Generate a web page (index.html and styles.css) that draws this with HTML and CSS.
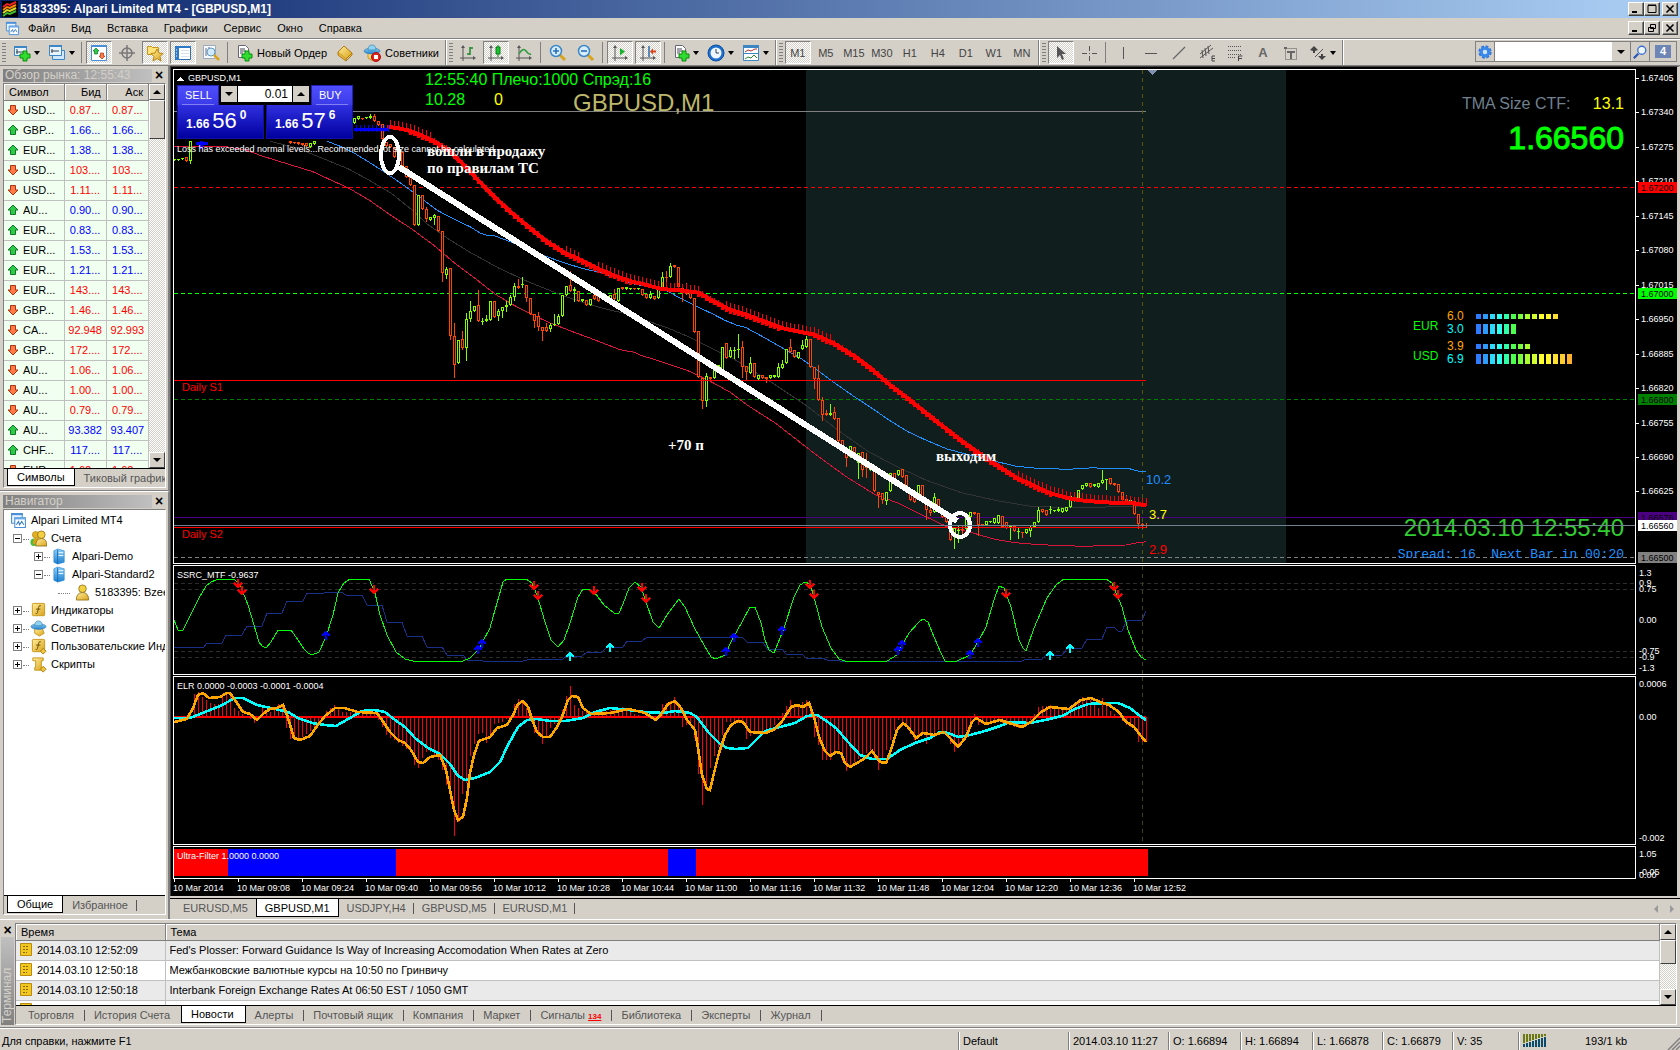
FILE: index.html
```html
<!DOCTYPE html>
<html lang="ru">
<head>
<meta charset="utf-8">
<title>5183395: Alpari Limited MT4 - [GBPUSD,M1]</title>
<link rel="stylesheet" href="styles.css">
</head>
<body>
<svg class="defs" aria-hidden="true">
  <defs>
    <linearGradient id="gGold" x1="0" y1="0" x2="1" y2="1"><stop offset="0" stop-color="#ffee9a"/><stop offset="1" stop-color="#d9a21b"/></linearGradient>
    <linearGradient id="gBlue" x1="0" y1="0" x2="0" y2="1"><stop offset="0" stop-color="#8fd0f5"/><stop offset="1" stop-color="#1d7fd0"/></linearGradient>
    <symbol id="up" viewBox="0 0 12 12"><path d="M6 1l5 5H8.500v4.500h-5V6H1z" fill="#2fc94a" stroke="#0c7a24"/></symbol>
    <symbol id="down" viewBox="0 0 12 12"><path d="M6 11l5-5H8.500V1.500h-5V6H1z" fill="#ff7a45" stroke="#a83410"/></symbol>
    <symbol id="logo" viewBox="0 0 16 16"><path d="M0 0h16v16H0z"/><path d="M1 6l4-3 3 1 6-3" stroke="#e22" stroke-width="2" fill="none"/><path d="M1 9l4-3 3 1 6-3" stroke="#f80" stroke-width="2" fill="none"/><path d="M1 12l4-3 3 1 6-3" stroke="#dd2" stroke-width="2" fill="none"/><path d="M1 15l4-3 3 1 6-3" stroke="#4b3" stroke-width="2" fill="none"/></symbol>
    <symbol id="windows" viewBox="0 0 16 16"><path d="M1.500 1.500h10v9h-10z" fill="#eaf4ff" stroke="#4a8fd8"/><path d="M1 1h11v2H1z" fill="#4a8fd8"/><path d="M4.500 5.500h10v9h-10z" fill="#fff" stroke="#4a8fd8"/><path d="M4 5h11v2H4z" fill="#6aa8e8"/><path d="M6 12l2-3 1 3 2-3 2 3" fill="none" stroke="#3a7fc8"/></symbol>
    <symbol id="plus" viewBox="0 0 12 12"><path d="M4 1h4v3h3v4H8v3H4V8H1V4h3z" fill="#2fdc2f" stroke="#0a8a0a"/></symbol>
    <symbol id="newchart" viewBox="0 0 18 18"><path d="M1.500 2.500h12v9h-12z" fill="#eaf4ff" stroke="#3d86c6"/><path d="M1 2h13v2H1z" fill="#3d86c6"/><path d="M4 5v5M3 8h8" stroke="#345"/><use href="#plus" x="6" y="6" width="12" height="12"/></symbol>
    <symbol id="profiles" viewBox="0 0 18 18"><path d="M4.500 6.500h12v9h-12z" fill="#cfe6fb" stroke="#3d86c6"/><path d="M1.500 1.500h12v10h-12z" fill="#eaf4ff" stroke="#3d86c6"/><path d="M1 1h13v2H1z" fill="#3d86c6"/><path d="M4 5v4M3 7h8" stroke="#345"/></symbol>
    <symbol id="market" viewBox="0 0 18 18"><path d="M1.500 1.500h15v15h-15z" fill="#fff" stroke="#4a90d8"/><path d="M1 1h16v2H1z" fill="#4a90d8"/><path d="M6 4l3 3H7.500v3h-3V7H3z" fill="#2fc94a" stroke="#0c7a24" stroke-width=".7"/><path d="M12 15l3-3h-1.500V9h-3v3H9z" fill="#ff7a45" stroke="#a83410" stroke-width=".7"/></symbol>
    <symbol id="target" viewBox="0 0 18 18"><circle cx="9" cy="9" r="5" fill="none" stroke="#777" stroke-width="1.500"/><path d="M9 1v16M1 9h16" stroke="#777" stroke-width="1.500"/></symbol>
    <symbol id="star" viewBox="0 0 18 18"><path d="M1.500 2.500h4l1 1h6v7h-11z" fill="#ffe27a" stroke="#c8961a"/><path d="M11 5l2 4 4 .5-3 3 1 4.500-4-2.500L7 17l1-4.500-3-3 4-.5z" fill="url(#gGold)" stroke="#b98510"/></symbol>
    <symbol id="panel" viewBox="0 0 18 18"><path d="M1.500 2.500h15v13h-15z" fill="#fff" stroke="#2d6fb8"/><path d="M1 2h16v2H1zM1 4h4v12H1z" fill="#2d78c8"/><path d="M2 6h1M2 9h1M2 12h1" stroke="#fff"/><path d="M7 6.500h8M7 9.500h8M7 12.500h8" stroke="#d6e2f0"/></symbol>
    <symbol id="tester" viewBox="0 0 18 18"><path d="M1.500 1.500h12v13h-12z" fill="#f8fbff" stroke="#9ab"/><path d="M4 4v8M7 3v6" stroke="#668"/><circle cx="9" cy="8" r="4" fill="#cfe9ff" stroke="#69b"/><path d="M12 11l5 5" stroke="#d9a21b" stroke-width="2.500"/></symbol>
    <symbol id="order" viewBox="0 0 18 18"><path d="M3.500 1.500h7l3 3v9h-10z" fill="#fff" stroke="#667"/><path d="M5 5h5M5 7h6M5 9h3" stroke="#445"/><use href="#plus" x="6" y="6" width="12" height="12"/></symbol>
    <symbol id="book" viewBox="0 0 18 18"><path d="M2 8l6-6 8 7-6 6z" fill="url(#gGold)" stroke="#b07a10"/><path d="M2 8v3l8 6v-2M10 17l6-6V9" fill="#e8b838" stroke="#b07a10"/></symbol>
    <symbol id="hat" viewBox="0 0 18 18"><path d="M5 9h8l2 5-5 3-5-3z" fill="url(#gGold)" stroke="#c8961a"/><ellipse cx="9" cy="7" rx="8" ry="3" fill="url(#gBlue)" stroke="#2c7ba8" stroke-width=".6"/><path d="M5 6q0-5 4-5t4 5z" fill="#8ed2f0" stroke="#2c7ba8" stroke-width=".6"/></symbol>
    <symbol id="advisor" viewBox="0 0 18 18"><use href="#hat" width="18" height="18"/><circle cx="13" cy="13" r="4.500" fill="#e0231c" stroke="#a11"/><path d="M11 11h4v4h-4z" fill="#fff"/></symbol>
    <symbol id="axes" viewBox="0 0 18 18"><path d="M4 3v14M1 14h14" stroke="#555"/><path d="M4 1L2 4h4zM17 14l-3-2v4z" fill="#555"/></symbol>
    <symbol id="bars" viewBox="0 0 18 18"><use href="#axes" width="18" height="18"/><path d="M11 3v8M11 4h3M8 10h3" stroke="#1a8a2a" stroke-width="1.500"/></symbol>
    <symbol id="candle" viewBox="0 0 18 18"><use href="#axes" width="18" height="18"/><path d="M11 1v12" stroke="#0a8a1a"/><path d="M9 3h4v7H9z" fill="#19c22c" stroke="#0a7a1a"/></symbol>
    <symbol id="line" viewBox="0 0 18 18"><use href="#axes" width="18" height="18"/><path d="M4 10q4-7 7-3t5 3" stroke="#2a9a3a" stroke-width="1.500" fill="none"/></symbol>
    <symbol id="zin" viewBox="0 0 18 18"><path d="M11 11l5 5" stroke="#d9a21b" stroke-width="3"/><circle cx="7" cy="7" r="5.500" fill="#d7ecff" stroke="#3a88c8" stroke-width="1.500"/><path d="M4 7h6M7 4v6" stroke="#2a6fb8" stroke-width="1.600"/></symbol>
    <symbol id="zout" viewBox="0 0 18 18"><path d="M11 11l5 5" stroke="#d9a21b" stroke-width="3"/><circle cx="7" cy="7" r="5.500" fill="#d7ecff" stroke="#3a88c8" stroke-width="1.500"/><path d="M4 7h6" stroke="#2a6fb8" stroke-width="1.600"/></symbol>
    <symbol id="scroll" viewBox="0 0 18 18"><use href="#axes" width="18" height="18"/><path d="M9 4l5 3.500-5 4z" fill="#19b22c"/></symbol>
    <symbol id="shift" viewBox="0 0 18 18"><use href="#axes" width="18" height="18"/><path d="M10 2v11" stroke="#246aa8" stroke-width="1.500"/><path d="M11 7.500l3-3v2h3v2h-3v2z" fill="#d8421a"/></symbol>
    <symbol id="clock" viewBox="0 0 18 18"><circle cx="9" cy="9" r="8" fill="#1c6fd0" stroke="#0d4d9c"/><circle cx="9" cy="9" r="5.500" fill="#eef7ff"/><path d="M9 5v4h3" stroke="#345" fill="none"/></symbol>
    <symbol id="template" viewBox="0 0 18 18"><path d="M1.500 1.500h15v15h-15z" fill="#fff" stroke="#3d86c6"/><path d="M1 1h16v3H1zM1 9h16v1H1z" fill="#3d86c6"/><path d="M3 8l3-2 3 1 4-2h2" stroke="#a33" fill="none"/><path d="M3 15l3-2 3 1 3-3 3 3" stroke="#2a8a3a" fill="none"/></symbol>
    <symbol id="cursor" viewBox="0 0 18 18"><path d="M5 2v12l3-3 2 5 2-1-2-5h4z" fill="#555"/></symbol>
    <symbol id="cross" viewBox="0 0 18 18"><path d="M9.500 2v5M9.500 12v5M2 9.500h5M12 9.500h5M9 9.500h1" stroke="#555"/></symbol>
    <symbol id="vline" viewBox="0 0 18 18"><path d="M9.500 3v12" stroke="#555"/></symbol>
    <symbol id="hline" viewBox="0 0 18 18"><path d="M3 9.500h12" stroke="#555"/></symbol>
    <symbol id="trend" viewBox="0 0 18 18"><path d="M3 15L15 3" stroke="#666" stroke-width="1.200"/></symbol>
    <symbol id="channel" viewBox="0 0 18 18"><path d="M2 10L13 1M2 14L15 4M4 6l1 8M7 4l1 8M10 2l1 8" stroke="#555"/><path d="M17 12h-3v5h3M14 14.500h3" stroke="#444" fill="none"/></symbol>
    <symbol id="fibo" viewBox="0 0 18 18"><path d="M2 2.500h13M2 6.500h13M2 10.500h13M2 13.500h8" stroke="#555" stroke-dasharray="1 1"/><path d="M12.500 17v-5h4M12 14.500h4" stroke="#444" fill="none"/></symbol>
    <symbol id="label" viewBox="0 0 18 18"><path d="M3.500 4.500h11v11h-11z" fill="none" stroke="#555" stroke-dasharray="1 1"/><path d="M2 3h3v2H2zM5 7h8v2h-3v6H8V9H5z" fill="#666"/></symbol>
    <symbol id="shapes" viewBox="0 0 18 18"><path d="M5 2l4 4-3 1v2H4V7L1 6zM13 16l4-4h-3v-2h-2v2H9z" fill="#444"/><path d="M6 13L14 5" stroke="#555"/></symbol>
    <symbol id="gear" viewBox="0 0 18 18"><circle cx="9" cy="9" r="6" fill="#2f78dc" stroke="#2f78dc" stroke-width="3" stroke-dasharray="3 1.700"/><circle cx="9" cy="9" r="6" fill="#3c88e8"/><circle cx="9" cy="9" r="2.500" fill="#cfe4ff"/></symbol>
    <symbol id="search" viewBox="0 0 18 18"><path d="M7 11l-5 5" stroke="#2a55b8" stroke-width="2.500"/><circle cx="11" cy="7" r="4.500" fill="#eef6ff" stroke="#3a70d0" stroke-width="1.500"/></symbol>
    <symbol id="people" viewBox="0 0 18 18"><ellipse cx="4" cy="13" rx="3.500" ry="4" fill="#3fc03f"/><circle cx="6" cy="5" r="3.500" fill="#e0b020" stroke="#a87a10" stroke-width=".6"/><path d="M3 15q0-7 4-7t4 7z" fill="#d9a21b"/><circle cx="12" cy="5" r="4" fill="#f2d040" stroke="#8a6408" stroke-width=".8"/><path d="M6 17q0-8 6-8t6 8z" fill="url(#gGold)" stroke="#8a6408" stroke-width=".8"/></symbol>
    <symbol id="user" viewBox="0 0 18 18"><circle cx="9" cy="5" r="4" fill="#f2d040" stroke="#8a6408" stroke-width=".8"/><path d="M2.500 17q0-8 6.500-8t6.500 8z" fill="url(#gGold)" stroke="#8a6408" stroke-width=".8"/></symbol>
    <symbol id="server" viewBox="0 0 18 18"><path d="M3 3l4-2 7 2v12l-7 2-4-2z" fill="url(#gBlue)" stroke="#1680d8" stroke-width=".6"/><path d="M7 2v15" stroke="#1670c0"/><path d="M8 5h5M8 8h5" stroke="#fff"/></symbol>
    <symbol id="func" viewBox="0 0 18 18"><rect x="2.500" y="1.500" width="13" height="13" rx="1" fill="url(#gGold)" stroke="#c8961a"/><path d="M11.500 4q-2-1-2.500 2l-1 5q-.5 2-2 1M6.500 7.500h4.500" stroke="#6a4a00" fill="none"/></symbol>
    <symbol id="func2" viewBox="0 0 18 18"><use href="#func" width="18" height="18"/><path d="M14 11l3 3-3 3-3-3z" fill="#f0c840" stroke="#a87a10"/></symbol>
    <symbol id="script" viewBox="0 0 18 18"><path d="M3 2h11v3h-2v7h3v3H5v-3h1V5H3z" fill="url(#gGold)" stroke="#c8961a"/><path d="M14 11l3 3-3 3-3-3z" fill="#f0c840" stroke="#a87a10"/></symbol>
    <symbol id="news" viewBox="0 0 12 14"><path d="M.5.500h11v12H.5z" fill="#f2c81e" stroke="#b88a10"/><path d="M3 3.500h6M3 6.500h6M3 9.500h4" stroke="#8a6400" stroke-dasharray="2 1"/></symbol>
  </defs>
</svg>

<header class="titlebar">
  <svg class="i16"><use href="#logo"/></svg>
  <h1>5183395: Alpari Limited MT4 - [GBPUSD,M1]</h1>
  <div class="winbtns">
    <button type="button" class="wb" aria-label="Свернуть"><svg viewBox="0 0 10 10"><path d="M1 7h5v2H1z"/></svg></button><button type="button" class="wb" aria-label="Развернуть"><svg viewBox="0 0 10 10"><path d="M1 1.500h8v7H1zM1 1h8" fill="none" stroke="#000"/></svg></button>
    <button type="button" class="wb last" aria-label="Закрыть"><svg viewBox="0 0 10 10"><path d="M1.500 1.500l7 7M8.500 1.500l-7 7" stroke="#000" stroke-width="1.600"/></svg></button>
  </div>
</header>

<nav class="menubar">
  <svg class="i16"><use href="#windows"/></svg>
  <button type="button">Файл</button><button type="button">Вид</button><button type="button">Вставка</button><button type="button">Графики</button><button type="button">Сервис</button><button type="button">Окно</button><button type="button">Справка</button>
  <div class="winbtns">
    <button type="button" class="wb" aria-label="Свернуть окно"><svg viewBox="0 0 10 10"><path d="M1 7h5v2H1z"/></svg></button><button type="button" class="wb" aria-label="Восстановить окно"><svg viewBox="0 0 10 10"><path d="M3.500 1.500h5v4h-5zM1.500 4.500h5v4h-5z" fill="#d4d0c8" stroke="#000"/></svg></button>
    <button type="button" class="wb last" aria-label="Закрыть окно"><svg viewBox="0 0 10 10"><path d="M1.500 1.500l7 7M8.500 1.500l-7 7" stroke="#000" stroke-width="1.600"/></svg></button>
  </div>
</nav>

<div class="toolbars">
  <div class="tb">
    <i class="grip"></i>
    <button type="button" class="t drop" aria-label="Новый график"><svg><use href="#newchart"/></svg></button><button type="button" class="t drop" aria-label="Профили"><svg><use href="#profiles"/></svg></button>
    <i class="sep"></i>
    <button type="button" class="t on" aria-label="Обзор рынка"><svg><use href="#market"/></svg></button><button type="button" class="t" aria-label="Окно данных"><svg><use href="#target"/></svg></button><button type="button" class="t on" aria-label="Навигатор"><svg><use href="#star"/></svg></button><button type="button" class="t on" aria-label="Терминал"><svg><use href="#panel"/></svg></button><button type="button" class="t" aria-label="Тестер"><svg><use href="#tester"/></svg></button>
    <i class="sep"></i>
    <button type="button" class="t txt"><svg><use href="#order"/></svg>Новый Ордер</button><button type="button" class="t" aria-label="Редактор"><svg><use href="#book"/></svg></button><button type="button" class="t txt"><svg><use href="#advisor"/></svg>Советники</button>
  </div>
  <div class="tb">
    <i class="grip"></i>
    <button type="button" class="t" aria-label="Бары"><svg><use href="#bars"/></svg></button><button type="button" class="t on" aria-label="Свечи"><svg><use href="#candle"/></svg></button><button type="button" class="t" aria-label="Линия"><svg><use href="#line"/></svg></button>
    <i class="sep"></i>
    <button type="button" class="t" aria-label="Увеличить"><svg><use href="#zin"/></svg></button><button type="button" class="t" aria-label="Уменьшить"><svg><use href="#zout"/></svg></button>
    <i class="sep"></i>
    <button type="button" class="t on" aria-label="Автопрокрутка"><svg><use href="#scroll"/></svg></button><button type="button" class="t on" aria-label="Сдвиг графика"><svg><use href="#shift"/></svg></button>
    <i class="sep"></i>
    <button type="button" class="t drop" aria-label="Индикаторы"><svg><use href="#order"/></svg></button><button type="button" class="t drop" aria-label="Периоды"><svg><use href="#clock"/></svg></button><button type="button" class="t drop" aria-label="Шаблоны"><svg><use href="#template"/></svg></button>
  </div>
  <div class="tb">
    <i class="grip"></i>
    <button type="button" class="t p on">M1</button><button type="button" class="t p">M5</button><button type="button" class="t p">M15</button><button type="button" class="t p">M30</button><button type="button" class="t p">H1</button><button type="button" class="t p">H4</button><button type="button" class="t p">D1</button><button type="button" class="t p">W1</button><button type="button" class="t p">MN</button>
  </div>
  <div class="tb">
    <i class="grip"></i>
    <button type="button" class="t on" aria-label="Курсор"><svg><use href="#cursor"/></svg></button><button type="button" class="t" aria-label="Перекрестие"><svg><use href="#cross"/></svg></button>
    <i class="sep"></i>
    <button type="button" class="t" aria-label="Вертикальная линия"><svg><use href="#vline"/></svg></button><button type="button" class="t" aria-label="Горизонтальная линия"><svg><use href="#hline"/></svg></button><button type="button" class="t" aria-label="Трендовая линия"><svg><use href="#trend"/></svg></button><button type="button" class="t" aria-label="Канал"><svg><use href="#channel"/></svg></button><button type="button" class="t" aria-label="Фибоначчи"><svg><use href="#fibo"/></svg></button><button type="button" class="t a">A</button><button type="button" class="t" aria-label="Метка"><svg><use href="#label"/></svg></button><button type="button" class="t drop" aria-label="Стрелки"><svg><use href="#shapes"/></svg></button>
  </div>
  <form class="find">
    <button type="button" aria-label="Настройки"><svg><use href="#gear"/></svg></button>
    <input type="text" aria-label="Поиск">
    <button type="button" class="tri" aria-label="История"></button>
    <button type="button" aria-label="Найти"><svg><use href="#search"/></svg></button>
    <button type="button" aria-label="Сообщения"><span class="badge">4</span></button>
  </form>
</div>

<main class="work">
  <aside class="side">
    <section class="dock market">
      <div class="cap"><h2>Обзор рынка: 12:55:43</h2><button type="button" class="x" aria-label="Закрыть">×</button></div>
      <div class="sunk">
        <div class="scrollwrap">
          <table class="quotes">
            <thead><tr><th>Символ</th><th>Бид</th><th>Аск</th></tr></thead>
            <tbody>
              <tr class="dn"><td><svg><use href="#down"/></svg>USD...</td><td>0.87...</td><td>0.87...</td></tr>
              <tr><td><svg><use href="#up"/></svg>GBP...</td><td>1.66...</td><td>1.66...</td></tr>
              <tr><td><svg><use href="#up"/></svg>EUR...</td><td>1.38...</td><td>1.38...</td></tr>
              <tr class="dn"><td><svg><use href="#down"/></svg>USD...</td><td>103....</td><td>103....</td></tr>
              <tr class="dn"><td><svg><use href="#down"/></svg>USD...</td><td>1.11...</td><td>1.11...</td></tr>
              <tr><td><svg><use href="#up"/></svg>AU...</td><td>0.90...</td><td>0.90...</td></tr>
              <tr><td><svg><use href="#up"/></svg>EUR...</td><td>0.83...</td><td>0.83...</td></tr>
              <tr><td><svg><use href="#up"/></svg>EUR...</td><td>1.53...</td><td>1.53...</td></tr>
              <tr><td><svg><use href="#up"/></svg>EUR...</td><td>1.21...</td><td>1.21...</td></tr>
              <tr class="dn"><td><svg><use href="#down"/></svg>EUR...</td><td>143....</td><td>143....</td></tr>
              <tr class="dn"><td><svg><use href="#down"/></svg>GBP...</td><td>1.46...</td><td>1.46...</td></tr>
              <tr class="dn"><td><svg><use href="#down"/></svg>CA...</td><td>92.948</td><td>92.993</td></tr>
              <tr class="dn"><td><svg><use href="#down"/></svg>GBP...</td><td>172....</td><td>172....</td></tr>
              <tr class="dn"><td><svg><use href="#down"/></svg>AU...</td><td>1.06...</td><td>1.06...</td></tr>
              <tr class="dn"><td><svg><use href="#down"/></svg>AU...</td><td>1.00...</td><td>1.00...</td></tr>
              <tr class="dn"><td><svg><use href="#down"/></svg>AU...</td><td>0.79...</td><td>0.79...</td></tr>
              <tr><td><svg><use href="#up"/></svg>AU...</td><td>93.382</td><td>93.407</td></tr>
              <tr><td><svg><use href="#up"/></svg>CHF...</td><td>117....</td><td>117....</td></tr>
              <tr class="dn"><td><svg><use href="#down"/></svg>EUR...</td><td>1.62...</td><td>1.62...</td></tr>
            </tbody>
          </table>
          <div class="sb"><button type="button" class="tri up" aria-label="Вверх"></button><i class="thumb"></i><button type="button" class="tri end" aria-label="Вниз"></button></div>
        </div>
        <div class="tabs"><button type="button" class="cur">Символы</button><button type="button">Тиковый график</button></div>
      </div>
    </section>
    <section class="dock nav">
      <div class="cap"><h2>Навигатор</h2><button type="button" class="x" aria-label="Закрыть">×</button></div>
      <div class="sunk">
        <ul class="tree">
          <li><svg class="ic"><use href="#windows"/></svg>Alpari Limited MT4</li>
          <li class="l1"><i class="box minus"></i><svg class="ic"><use href="#people"/></svg>Счета</li>
          <li class="l2"><i class="box"></i><svg class="ic"><use href="#server"/></svg>Alpari-Demo</li>
          <li class="l2"><i class="box minus"></i><svg class="ic"><use href="#server"/></svg>Alpari-Standard2</li>
          <li class="l3"><i class="stub"></i><svg class="ic"><use href="#user"/></svg>5183395: Bzeen</li>
          <li class="l1"><i class="box"></i><svg class="ic"><use href="#func"/></svg>Индикаторы</li>
          <li class="l1"><i class="box"></i><svg class="ic"><use href="#hat"/></svg>Советники</li>
          <li class="l1"><i class="box"></i><svg class="ic"><use href="#func2"/></svg>Пользовательские Индикаторы</li>
          <li class="l1"><i class="box"></i><svg class="ic"><use href="#script"/></svg>Скрипты</li>
        </ul>
        <div class="tabs"><button type="button" class="cur">Общие</button><button type="button" class="bar">Избранное</button></div>
      </div>
    </section>
  </aside>

  <section class="charts">
    <div class="frame">
      <div class="pane main">
        <div class="plot">
          <svg class="cv" id="main">
            <g transform="translate(-174 -70)">
              <rect x="806" y="70" width="480" height="1000" fill="#111e1e"/>
              <path d="M0 111.500H1146" stroke="#808080"/>
              <path d="M174 187.500H4000" stroke="#f00" stroke-dasharray="4 3"/>
              <path d="M174 293.500H4000" stroke="#0f0" stroke-dasharray="4 3"/>
              <path d="M174 399.500H4000" stroke="#008000" stroke-dasharray="4 3"/>
              <path d="M174 557.500H4000" stroke="#808080" stroke-dasharray="4 3"/>
              <path d="M1142.500 70V1000" stroke="#55550a" stroke-dasharray="4 4"/>
              <path d="M174 517.500H4000" stroke="#4b0082"/>
              <path d="M1147 70h10l-5 5z" fill="#8090b0"/>
              <g id="price"></g>
              <path d="M0 380.500H1146M0 527.500H1146" stroke="#f00"/>
              <g class="note"><ellipse cx="390" cy="155" rx="9" ry="18"/><ellipse cx="960" cy="525" rx="10" ry="12"/><path d="M399 167L957 521" stroke-width="6"/></g>
              <g class="serif"><text x="427" y="156">вошли в продажу</text><text x="427" y="173">по правилам ТС</text><text x="668" y="450">+70 п</text><text x="936" y="461">выходим</text></g>
              <g class="sans"><text class="s16" x="425" y="85" fill="#0f0">12:55:40 Плечо:1000 Спрэд:16</text><text class="s16" x="425" y="105" fill="#0f0">10.28</text><text class="s16" x="494" y="105" fill="#ff0">0</text><text class="s24" x="573" y="111" fill="#bdb76b">GBPUSD,M1</text><text class="s11" x="182" y="391" fill="#f00">Daily S1</text><text class="s11" x="182" y="538" fill="#f00">Daily S2</text><text class="s13" x="1146" y="484" fill="#1e90ff">10.2</text><text class="s13" x="1149" y="519" fill="#ff0">3.7</text><text class="s13" x="1149" y="554" fill="#f00">2.9</text></g>
              <path d="M176 81l4-4 4 4z" fill="#fff"/>
              <g class="small"><text x="188" y="81">GBPUSD,M1</text><text x="177" y="152">Loss has exceeded normal levels...Recommended lot size cannot be calculated.</text></g>
            </g>
          </svg>
          <form class="trade">
            <button type="button" class="tab sell">SELL</button>
            <div class="lot"><button type="button" class="tri" aria-label="Меньше"></button><input type="text" value="0.01" aria-label="Объем"><button type="button" class="tri up" aria-label="Больше"></button></div>
            <button type="button" class="tab buy">BUY</button>
            <button type="button" class="px sellpx"><b>1.66</b><span>56</span><sup>0</sup></button>
            <button type="button" class="px buypx"><b>1.66</b><span>57</span><sup>6</sup></button>
          </form>
          <div class="corner">
            <p class="tma"><span>TMA Size CTF:</span><span class="y">13.1</span></p>
            <p class="bid">1.66560</p>
          </div>
          <svg class="power" id="power"></svg>
          <div class="foot">
            <p class="clock">2014.03.10 12:55:40</p>
            <p class="spread">Spread: 16&nbsp; Next Bar in 00:20</p>
          </div>
          <i class="bidline"></i>
        </div>
        <svg class="axis" id="ax0"></svg>
      </div>
      <div class="pane ssrc">
        <div class="plot"><svg class="cv"><g transform="translate(-174 -566)"><path d="M174 583.500H4000M174 589.500H4000M174 651.500H4000M174 657.500H4000" stroke="#2c2c2c" stroke-dasharray="4 3"/><path d="M1142.500 566V1000" stroke="#44440a" stroke-dasharray="4 4"/><g id="osc"></g><text class="small" x="177" y="578">SSRC_MTF -0.9637</text></g></svg></div>
        <svg class="axis" id="ax1"></svg>
      </div>
      <div class="pane elr">
        <div class="plot"><svg class="cv"><g transform="translate(-174 -677)"><path d="M1142.500 677V1000" stroke="#44440a" stroke-dasharray="4 4"/><g id="hist"></g><text class="small" x="177" y="689">ELR 0.0000 -0.0003 -0.0001 -0.0004</text></g></svg></div>
        <svg class="axis" id="ax2"></svg>
      </div>
      <div class="pane ultra">
        <div class="plot"><svg class="cv"><g transform="translate(-174 -847)"><path d="M174 849h974v27H174z" fill="#f00"/><path d="M228 849h168v27H228zM668 849h28v27h-28z" fill="#00f"/><text class="small" x="177" y="859">Ultra-Filter 1.0000 0.0000</text></g></svg></div>
        <svg class="axis" id="ax3"></svg>
      </div>
      <svg class="timeaxis" id="time"></svg>
    </div>
    <div class="ctabs"><button type="button">EURUSD,M5</button><button type="button" class="cur">GBPUSD,M1</button><button type="button">USDJPY,H4</button><button type="button">GBPUSD,M5</button><button type="button">EURUSD,M1</button><span class="arrows"><i></i><i></i></span></div>
  </section>
</main>

<section class="terminal">
  <div class="vcap"><button type="button" class="x" aria-label="Закрыть">×</button><h2>Терминал</h2></div>
  <div class="sunk">
    <div class="scrollwrap">
      <table class="newslist">
        <thead><tr><th class="time">Время</th><th>Тема</th></tr></thead>
        <tbody>
          <tr><td><svg><use href="#news"/></svg>2014.03.10 12:52:09</td><td>Fed's Plosser: Forward Guidance Is Way of Increasing Accomodation When Rates at Zero</td></tr>
          <tr><td><svg><use href="#news"/></svg>2014.03.10 12:50:18</td><td>Межбанковские валютные курсы на 10:50 по Гринвичу</td></tr>
          <tr><td><svg><use href="#news"/></svg>2014.03.10 12:50:18</td><td>Interbank Foreign Exchange Rates At 06:50 EST / 1050 GMT</td></tr>
          <tr><td><svg><use href="#news"/></svg></td><td></td></tr>
        </tbody>
      </table>
      <div class="sb"><button type="button" class="tri up" aria-label="Вверх"></button><i class="thumb"></i><button type="button" class="tri end" aria-label="Вниз"></button></div>
    </div>
    <div class="tabs wide"><button type="button" class="bar">Торговля</button><button type="button">История Счета</button><button type="button" class="cur">Новости</button><button type="button" class="bar">Алерты</button><button type="button" class="bar">Почтовый ящик</button><button type="button" class="bar">Компания</button><button type="button" class="bar">Маркет</button><button type="button" class="bar">Сигналы <small>134</small></button><button type="button" class="bar">Библиотека</button><button type="button" class="bar">Эксперты</button><button type="button" class="bar">Журнал</button></div>
  </div>
</section>

<footer class="status">
  <span class="help">Для справки, нажмите F1</span>
  <span class="c w110">Default</span><span class="c w100">2014.03.10 11:27</span><span class="c w72">O: 1.66894</span><span class="c w72">H: 1.66894</span><span class="c w70">L: 1.66878</span><span class="c w70">C: 1.66879</span><span class="c w66">V: 35</span>
  <span class="c conn"><svg width="26" height="13" id="signal"></svg><span>193/1 kb</span></span>
  <svg class="sizer" viewBox="0 0 13 13"><path d="M1 13L13 1M5 13l8-8M9 13l4-4" stroke="#808080" stroke-width="1.500"/></svg>
</footer>
<script src="chart.js"></script>
</body>
</html>
```

FILE: styles.css
```css
* { box-sizing: border-box; }
body { margin: 0; min-height: 100vh; display: flex; flex-direction: column; background: #d4d0c8; color: #000; font: 11px/14px "Liberation Sans", Arial, sans-serif; overflow: hidden; }
h1, h2, p, ul { margin: 0; padding: 0; font-size: inherit; font-weight: normal; list-style: none; }
button, input { font: inherit; color: inherit; margin: 0; padding: 0; border: 0; border-radius: 0; background: none; }
svg { display: block; flex: none; }
.defs { position: absolute; width: 0; height: 0; }
.i16 { width: 16px; height: 16px; }

/* caption and menu */
.titlebar { display: flex; align-items: center; height: 18px; padding: 0 2px; gap: 2px; background: linear-gradient(90deg, #0a246a, #a6caf0 96%); color: #fff; }
.titlebar h1 { font: bold 12px/16px "Liberation Sans", Arial, sans-serif; }
.winbtns { display: flex; margin-left: auto; }
.wb { width: 16px; height: 14px; display: flex; align-items: center; justify-content: center; background: #d4d0c8; border: 1px solid; border-color: #fff #404040 #404040 #fff; box-shadow: inset -1px -1px #808080; }
.wb.last { margin-left: 2px; }
.wb svg { width: 10px; height: 10px; }
.menubar { display: flex; align-items: center; height: 20px; padding: 0 2px 0 5px; }
.menubar > button { padding: 0 8px; line-height: 18px; }
.menubar .i16 { width: 15px; height: 15px; }

/* toolbars */
.toolbars { display: flex; height: 28px; border-top: 1px solid #808080; border-bottom: 1px solid #808080; box-shadow: inset 0 1px #fff; padding-top: 1px; }
.tb { display: flex; align-items: center; padding-right: 2px; border-right: 1px solid #808080; box-shadow: 1px 0 #fff; margin-right: 1px; }
.grip { width: 4px; height: 20px; margin: 0 1px 0 2px; background: repeating-linear-gradient(#808080 0 1px, #d4d0c8 1px 3px); }
.sep { width: 1px; height: 21px; margin: 0 3px 0 2px; background: #808080; }
.t { width: 28px; height: 23px; display: flex; align-items: center; justify-content: center; }
.t svg { width: 18px; height: 18px; }
.on { background: conic-gradient(#fff 25%, #d4d0c8 0 50%, #fff 0 75%, #d4d0c8 0) 0 0 / 2px 2px; border: 1px solid; border-color: #808080 #fff #fff #808080; width: 26px; margin: 0 1px; }
.drop { width: 35px; gap: 3px; }
.drop::after { content: ""; border: 3px solid transparent; border-top: 4px solid #000; border-bottom: 0; }
.tb:first-child .grip { margin-right: 3px; }
.txt { width: auto; gap: 4px; padding: 0 4px; white-space: nowrap; }
.p { color: #444; }
.a { font-weight: bold; font-size: 13px; color: #666; }
.find { display: flex; align-items: stretch; width: 202px; height: 21px; margin: 1px 3px 0 auto; border: 1px solid #808080; }
.find button { width: 19px; display: flex; align-items: center; justify-content: center; border-right: 1px solid #808080; }
.find button:last-child { width: 26px; border: 0; }
.find input { flex: 1; min-width: 0; background: #fff; }
.find svg { width: 16px; height: 16px; }
.badge { background: #6d86b5; color: #fff; font-weight: bold; width: 16px; line-height: 13px; }
.tri::before { content: ""; border: 4px solid transparent; border-top-color: #000; border-bottom: 0; }
.tri.up::before { border: 4px solid transparent; border-bottom-color: #000; border-top: 0; }

/* docked panels */
.work { flex: 1; display: flex; min-height: 0; }
.side { width: 169px; flex: none; display: flex; flex-direction: column; }
.dock { display: flex; flex-direction: column; padding: 2px 2px 2px 3px; min-height: 0; border-right: 1px solid #808080; }
.market { height: 425px; border-bottom: 1px solid #808080; }
.nav { flex: 1; border-top: 1px solid #fff; padding-bottom: 4px; }
.cap { display: flex; align-items: center; height: 14px; }
.cap h2 { flex: 1; padding-left: 2px; color: #d4d0c8; background: linear-gradient(90deg, #808080, #c0c0c0); font-size: 12px; line-height: 13px; white-space: nowrap; }
.x { width: 14px; font: bold 14px/12px "Liberation Sans", Arial, sans-serif; text-align: center; }
.sunk { flex: 1; min-width: 0; min-height: 0; display: flex; flex-direction: column; margin-top: 1px; border: 1px solid; border-color: #808080 #fff #fff #808080; }
.scrollwrap { flex: 1; min-height: 0; display: flex; overflow: hidden; }
table { border-collapse: collapse; table-layout: fixed; }
.quotes { width: 146px; background: #f0fff0; align-self: flex-start; }
.quotes th { height: 16px; padding: 0 5px; font-weight: normal; text-align: right; background: #d4d0c8; border-right: 1px solid #808080; border-bottom: 1px solid #808080; box-shadow: inset 1px 1px #fff; }
.quotes th:first-child { width: 60px; text-align: left; }
.quotes td { height: 20px; padding: 0; border-right: 1px solid #c0c0c0; border-bottom: 1px solid #c0c0c0; color: #00f; text-align: center; white-space: nowrap; }
.quotes .dn td { color: #f00; }
.quotes td:first-child, .quotes .dn td:first-child { color: #000; text-align: left; }
.quotes td svg { display: inline-block; width: 12px; height: 12px; margin: 0 4px 0 3px; vertical-align: -2px; }
.sb { flex: none; width: 16px; display: flex; flex-direction: column; background: conic-gradient(#fff 25%, #d4d0c8 0 50%, #fff 0 75%, #d4d0c8 0) 0 0 / 2px 2px; }
.sb button, .thumb { height: 16px; display: flex; align-items: center; justify-content: center; background: #d4d0c8; border: 1px solid; border-color: #fff #404040 #404040 #fff; }
.thumb { height: 39px; }
.sb .end { margin-top: auto; }
.tabs { flex: none; display: flex; height: 19px; border-top: 1px solid #000; padding-left: 3px; overflow: hidden; color: #555; }
.tabs button { padding: 0 9px; height: 18px; white-space: nowrap; }
.tabs .cur { background: #fff; color: #000; border: 1px solid #000; border-top: 0; margin-top: -1px; height: 18px; }
.tabs .bar { background: linear-gradient(#555, #555) right 4px / 1px 11px no-repeat; }
.tree { flex: 1; background: #fff; padding: 1px 0 0 6px; overflow: hidden; }
.tree li { display: flex; align-items: center; height: 18px; white-space: nowrap; }
.ic { width: 17px; height: 17px; margin-right: 4px; }
.l1 { padding-left: 3px; }
.l2 { padding-left: 24px; }
.l3 { padding-left: 48px; }
.box { flex: none; width: 9px; height: 9px; margin-right: 8px; border: 1px solid #808080; background: linear-gradient(#000, #000) center / 5px 1px no-repeat, linear-gradient(#000, #000) center / 1px 5px no-repeat; }
.minus { background: linear-gradient(#000, #000) center / 5px 1px no-repeat; }
.box::after, .stub { content: ""; display: block; width: 6px; height: 4px; margin-left: 9px; border-bottom: 1px dotted #808080; }
.stub { flex: none; width: 12px; margin: 0 4px 0 0; }

/* chart window */
.charts { flex: 1; min-width: 0; display: flex; flex-direction: column; border-left: 1px solid #808080; }
.frame { flex: 1; min-height: 0; display: flex; flex-direction: column; background: #000; border-left: 1px solid #404040; border-top: 1px solid #404040; border-right: 3px solid #d4d0c8; padding: 2px 0 0 2px; }
.pane { display: flex; height: 110px; flex: none; margin-bottom: 1px; }
.main { flex: 1; min-height: 0; }
.elr { height: 169px; }
.ultra { height: 33px; margin-bottom: 0; }
.plot { position: relative; flex: 1; min-width: 0; border: 1px solid #fff; overflow: hidden; }
.cv { position: absolute; inset: 0; width: 100%; height: 100%; shape-rendering: crispEdges; fill: none; }
.axis { width: 41px; height: 100%; overflow: hidden; shape-rendering: crispEdges; }
.timeaxis { width: 100%; height: 17px; shape-rendering: crispEdges; }
.small, .axis, .timeaxis { font-size: 9px; fill: #fff; }
.note { stroke: #fff; stroke-width: 4; }
.serif { font: bold 15px "Liberation Serif", "Times New Roman", serif; fill: #fff; }
.s11 { font-size: 11px; }
.s13 { font-size: 13px; }
.s16 { font-size: 16px; }
.s24 { font-size: 24px; }
.trade { position: absolute; left: 3px; top: 15px; width: 176px; display: grid; grid-template-columns: 42px 46px 46px 42px; grid-template-rows: 20px 34px; background: #000; color: #fff; }
.tab { background: linear-gradient(#8080f0, #8080f0) center bottom / 32px 1px no-repeat, linear-gradient(#5050ff, #3a3ae8); text-align: left; padding-left: 8px; font-size: 11px; box-shadow: inset 1px 1px #2020c0, inset -1px 0 #2020c0; }
.lot { grid-column: 2 / 4; display: flex; height: 16px; margin: 1px 2px 0; gap: 1px; }
.lot .tri { width: 16px; background: #d4d0c8; display: flex; align-items: center; justify-content: center; }
.lot input { flex: 1; min-width: 0; background: #fff; color: #000; text-align: right; padding-right: 4px; font-size: 12px; }
.px { grid-column: 1 / 3; background: linear-gradient(#3030e0, #0000a0); display: flex; align-items: baseline; padding: 4px 0 0 8px; gap: 3px; margin-right: 1px; border: 1px solid #1010a8; border-top: 0; line-height: 24px; }
.buypx { grid-column: 3 / 5; margin: 0 0 0 1px; }
.px b { font-size: 12px; }
.px span { font-size: 22px; }
.px sup { font: bold 12px/12px "Liberation Sans", Arial, sans-serif; align-self: flex-start; }
.corner { position: absolute; right: 11px; top: 24px; text-align: right; }
.tma { display: flex; justify-content: space-between; width: 162px; font-size: 16px; line-height: 20px; color: #708090; }
.y { color: #ff0; }
.bid { margin-top: 6px; font-size: 32px; line-height: 36px; color: #0f0; -webkit-text-stroke: 1px #0f0; }
.power { position: absolute; right: 60px; top: 240px; width: 162px; height: 56px; }
.foot { position: absolute; right: 11px; bottom: 5px; height: 42px; overflow: hidden; text-align: right; white-space: nowrap; }
.clock { font-size: 24px; line-height: 24px; color: #32cd32; }
.spread { margin-top: 7px; font: 13px/15px "Liberation Mono", "Courier New", monospace; color: #1e90ff; }
.bidline { position: absolute; left: 0; right: 0; bottom: 37px; height: 1px; background: #708090; }
.ctabs { display: flex; height: 21px; margin-top: 2px; border-top: 1px solid #000; padding-left: 5px; color: #555; }
.ctabs button { padding: 0 8px; height: 17px; background: linear-gradient(#555, #555) right 4px / 1px 11px no-repeat; }
.ctabs .cur { background: #fff; color: #000; border: 1px solid #000; border-top: 0; height: 18px; }
.ctabs button:first-child { background: none; }
.arrows { margin-left: auto; display: flex; gap: 12px; padding: 6px 6px 0 0; }
.arrows i { border: 4px solid transparent; border-right-color: #999; border-left: 0; height: 8px; }
.arrows i + i { border-left: 4px solid #999; border-right: 0; }

/* terminal */
.terminal { display: flex; height: 109px; border-top: 1px solid #fff; border-bottom: 1px solid #808080; padding: 3px 3px 2px 0; }
.vcap { width: 15px; display: flex; flex-direction: column; align-items: center; }
.vcap h2 { flex: 1; width: 13px; writing-mode: vertical-rl; transform: rotate(180deg); color: #d4d0c8; background: linear-gradient(#808080, #c0c0c0); font-size: 12px; line-height: 13px; padding-top: 2px; }
.vcap .x { height: 14px; }
.terminal .sunk { margin: 0; }
.newslist { flex: 1; background: #fff; align-self: flex-start; }
.newslist th { height: 16px; padding: 0 5px; text-align: left; font-weight: normal; background: #d4d0c8; border-right: 1px solid #808080; border-bottom: 1px solid #808080; box-shadow: inset 1px 1px #fff; }
.newslist .time { width: 149px; }
.newslist td { height: 20px; padding: 0 4px; border-right: 1px solid #c0c0c0; border-bottom: 1px solid #c0c0c0; }
.newslist tr:nth-child(odd) td { background: #eaeaea; }
.newslist svg { display: inline-block; width: 12px; height: 14px; margin-right: 5px; vertical-align: -3px; }
.terminal .thumb { height: 24px; }
.wide { padding-left: 3px; }
.wide button { padding: 0 11px 0 9px; }
small { color: #f00; font-size: 8px; font-weight: bold; line-height: 8px; text-decoration: underline; }

/* status bar */
.status { display: flex; align-items: center; height: 22px; border-top: 1px solid #fff; padding: 2px 0 0 2px; }
.help { flex: 1; }
.c { height: 18px; line-height: 18px; padding-left: 4px; border-left: 1px solid #808080; box-shadow: inset 1px 0 #fff; white-space: nowrap; }
.w110 { width: 110px; }
.w100 { width: 100px; }
.w72 { width: 72px; }
.w70 { width: 70px; }
.w66 { width: 66px; }
.conn { display: flex; align-items: center; gap: 36px; width: 149px; }
.sizer { width: 13px; height: 13px; align-self: flex-end; }
```

FILE: chart.js
```js
const NS = 'http://www.w3.org/2000/svg';
const $ = id => document.getElementById(id);
function add(parent, tag, attrs, text) {
  const e = document.createElementNS(NS, tag);
  for (const k in attrs) e.setAttribute(k, attrs[k]);
  if (text) e.textContent = text;
  parent.appendChild(e);
  return e;
}
// "x,y x,y ..." in steps of sx / sy from the origin ox, oy
function pts(src, ox = 0, oy = 0, sx = 1, sy = 1) {
  return src.trim().split(/\s+/).map(p => {
    const [x, y] = p.split(',').map(Number);
    return [ox + x / sx, oy + y / sy];
  });
}
const path = p => 'M' + p.map(a => a.map(v => Math.round(v * 10) / 10).join(' ')).join('L');
function at(p, x) {
  for (let i = 1; i < p.length; i++) if (x <= p[i][0]) {
    const [a, b] = [p[i - 1], p[i]];
    return a[1] + (b[1] - a[1]) * (x - a[0]) / (b[0] - a[0] || 1);
  }
  return p[p.length - 1][1];
}
const A = s => pts(s, 170, 64, 2.8, 3);
const B = s => pts(s, 640, 250, 2.8, 3);
const price = $('price');

// channel lines
const grey = A('280,232 350,250 420,280 500,315 560,350 620,388 680,440 720,480 780,525 840,565 920,612 1000,652 1100,695 1200,730 1280,750').concat(B('0,205 80,235 140,262 200,295 260,325 370,398 470,470 560,545 640,605 720,650 800,690 900,728 1000,752 1100,770 1200,772 1417,770'));
const crimson = A('11,247 150,247 210,257 260,277 330,300 400,323 450,348 500,372 560,410 620,455 680,497 740,545 800,600 860,648 910,690 960,722 1020,755 1060,775 1120,800 1190,828 1260,857 1300,865').concat(B('0,315 60,335 130,360 190,390 250,425 300,465 380,520 440,570 500,620 580,682 660,735 720,758 790,795 860,830 930,848 990,867 1050,878 1120,884 1240,889 1300,887 1360,885 1390,879 1417,875'));
const blue = A('440,232 480,248 520,270 570,303 620,338 660,368 700,400 750,440 800,468 840,488 870,508 890,515 910,516 940,528 980,545 1040,572 1100,595 1150,612 1210,627 1300,660').concat(B('75,122 110,143 150,165 200,190 240,212 270,225 295,232 340,258 400,295 450,325 490,355 540,395 600,440 650,475 700,512 750,545 800,570 860,597 920,614 1000,635 1050,648 1110,655 1200,658 1270,653 1300,656 1370,656 1395,663 1417,665'));
const band = A('607,188 640,193 670,200 700,212 740,232 780,258 820,300 860,345 900,390 950,440 1000,485 1050,528 1100,563 1150,588 1200,615 1250,637 1300,655').concat(B('0,100 60,117 120,122 165,128 200,150 250,178 300,195 350,215 400,235 450,246 490,254 540,278 600,318 650,358 700,405 750,445 800,488 850,530 900,572 950,610 1000,646 1050,680 1100,706 1150,730 1200,745 1250,753 1320,758 1380,760 1417,766'));
add(price, 'path', { d: path(grey), stroke: '#333' });
add(price, 'path', { d: path(crimson), stroke: '#dc143c' });
add(price, 'path', { d: path(blue), stroke: '#1e90ff' });

// candles: u = rising, d = falling; body top, body bottom, high, low (thirds of a pixel)
function candles(x, oy, src) {
  for (const c of src.trim().split(/\s+/)) {
    const v = c.slice(1).split(',').map(Number);
    const [t, b, h = v[0], l = v[1]] = v;
    const col = c[0] === 'u' ? '#7fff00' : '#ff4500';
    const Y = n => Math.round(oy + n / 3);
    add(price, 'path', { d: `M${x + .5} ${Y(h)}V${Y(l) + 1}`, stroke: col });
    add(price, 'rect', { x: x - .5, y: Y(t) + .5, width: 2, height: Math.max(0.01, Y(b) - Y(t) - 1), stroke: col, fill: '#000' });
    x += 4;
  }
}
candles(174, 64, 'u286,288 u286,289 u281,286 d280,292 u232,292,232,296');
candles(290, 64, 'd232,236 d233,238 d234,240 d237,243 d237,247 u236,248 u232,240');
candles(354, 64, `u162,176 u155,165 d163,166 u160,163 u155,163,150 d155,172,150 d172,182 d180,226,180,240
 d235,245 d240,250 d250,280 d255,265 d265,305 d305,340 d325,362 d362,482
 u392,482 d392,436 d436,466,430,470 u458,468 u452,462,450,480 d455,500 d502,628,502,650 u615,632,608,642
 d613,817,613,825 d817,902,778,938 u829,898 d826,851,800,855 u766,851,747,887 u740,766,711,770 u727,742 d722,772,678
 u770,774,762,779 u766,772,753 u712,769 d711,758 u742,755,735,767 u728,740,728,760 u724,728,712,742 u700,724,692
 u667,700,656,707 d667,673,645 u660,664,640,670 d664,702,664,710 d702,750 d750,770,750,788 d757,788,744,798 d790,800,790,827
 d790,802,778 u782,796,778,800 u779,783,750 u757,781,750 u693,757 u667,693 d664,680,622 u676,680,670,710
 d680,710 u706,711 d708,722 u706,724 d692,706 d694,710 d690,706 u700,712
 u692,706 d690,705,676 u672,710 d668,676 u670,674 u672,675 d671,674 u672,675
 d674,694 d690,702 u690,702,680 d695,704 u670,702 u638,670,625 d638,640,622,675 u605,640,598
 d604,609 d609,668 d672,680,668,710 d680,690,657 d688,702,665 d702,805 d800,940 d943,1010,943,1031`);
candles(706, 250, `u378,452,370,468 d380,388 u360,385 u345,365 u292,365 d280,325 u300,322,290 u300,302,290,325
 u297,299,252,322 d291,350,273,380 d348,365,348,388 u340,370,320 d340,382 u376,386 d376,384 d382,386,382,395
 u375,385 u376,380 u352,380,340 u342,355,330 u297,338 d292,305,267 d300,322 u305,325
 u285,297,270 u268,290,258 d268,352 d352,388,352,413 d385,450,345 d450,494,442,510 d490,496,480 u490,496,462
 d485,508,472 d505,572 d570,600 d600,625,600,648 u588,620 d590,610 u610,640,610,683 d605,660,605,678
 d640,655,610,680 u640,660 d660,724 d725,735,725,770 d730,750,730,758 u726,752,726,762 u670,724 d670,690
 u660,675 d657,680 d675,720 d720,750 d740,755 u704,745 d705,755 d750,780,750,808
 d780,788,755,795 u740,785,730 d747,775 d790,800 d800,815 d825,870 u835,850,835,893 u840,843,825,875
 d838,841,828,850 u800,838 u787,800 d785,792 d790,824,790,854 d822,826 u812,826 u813,817
 u805,818 u796,818 d798,830 d815,833 u828,832,828,867 d828,843 u843,847,830,865 d845,848,845,860
 u838,850 u830,842,825,858 u815,830 u780,815,770 d776,785 d780,795 u778,781,768,790 u779,782
 u777,783,770 u775,785 u770,782 u738,770 d740,754 u720,750 u705,718 u700,708
 d700,710 u702,708 u700,712 u690,698,660 u687,690,687,716 d685,703 d700,705 d703,726
 d726,750 d748,752,735 u750,753,745 d752,792 d793,822,793,835 d822,826,818,834 d824,827,818,832`);

// wide band with a tick on every bar
add(price, 'path', { d: path(band), stroke: '#f00', 'stroke-width': 4 });
for (let x = 390; x <= 1146; x += 4) {
  const y = at(band, x), k = at(band, x + 4) - y;
  add(price, 'path', { d: `M${x + .5} ${Math.round(y - (k > 2 ? 3 : 7))}V${Math.round(y + 1)}`, stroke: '#f00' });
  if (k > 1.2) add(price, 'rect', { x: x - 1, y: Math.round(y - 1), width: 3, height: 5, fill: '#f00' });
}
add(price, 'path', { d: 'M354 129.500H388M196 143.500h12M201.500 141v8', stroke: '#00f', 'stroke-width': 3 });
for (let x = 356; x < 390; x += 4) add(price, 'path', { d: `M${x + .5} 125V132`, stroke: '#00f' });

// oscillator
const osc = $('osc');
add(osc, 'path', { stroke: '#1a2f8a', d: path(pts('174,647 203,648 207,643 222,643 226,635 242,635 247,626 262,626 267,613 282,613 287,601 303,601 307,593 324,593 328,592 341,592 346,595 362,595 367,605 382,605 387,622 402,622 407,636 422,636 427,647 442,647 447,655 463,655 467,660 483,661 523,661 527,660 543,659 563,659 567,656 582,656 587,652 602,652 607,647 623,647 627,641 642,641 647,637 742,637 747,642 763,642 767,649 782,649 786,654 802,654 806,658 822,658 827,660 840,661 1022,661 1026,659 1042,659 1046,655 1062,655 1068,648 1082,648 1087,639 1102,639 1107,627 1114,627 1118,631 1122,631 1127,620 1142,620 1146,611')) });
add(osc, 'path', { stroke: '#0f0', d: path(pts('174,620 178,630 183,630 189,618 199,598 206,586 211,582 216,580 233,579 238,582 241,587 248,605 254,625 259,642 262,646 266,648 271,642 278,630 291,630 298,640 304,649 308,653 312,655 319,652 326,637 333,615 338,593 344,583 350,579 369,579 375,593 380,615 387,635 396,652 405,659 413,661 463,661 470,658 478,650 482,643 490,628 495,610 503,582 507,579 526,579 532,583 537,595 545,622 551,640 558,647 564,640 570,623 578,597 583,589 589,589 595,593 604,605 614,613 619,613 623,604 629,588 635,582 641,587 646,602 653,622 659,628 667,615 679,599 685,607 694,627 704,645 711,657 716,659 725,655 732,640 742,622 750,607 755,607 761,623 765,640 769,650 774,653 784,628 794,597 800,585 805,582 810,584 814,597 822,627 831,648 839,659 845,661 887,661 897,655 902,645 909,633 919,622 923,619 928,622 934,637 941,653 945,661 957,661 970,655 978,642 986,627 994,600 999,586 1004,588 1011,607 1019,640 1023,648 1026,651 1034,628 1047,598 1056,585 1064,579 1106,579 1112,583 1122,607 1128,630 1136,650 1141,657 1146,660')) });
function arrows(list, color, dir) {
  for (const [x, y] of pts(list)) add(osc, 'path', { d: `M${x} ${y - 4 * dir}V${y + 4 * dir}M${x - 4} ${y}L${x} ${y + 4 * dir}L${x + 4} ${y}`, stroke: color, 'stroke-width': 2 });
}
arrows('238,583 242,590 374,589 534,585 538,595 594,590 642,587 646,598 810,584 814,594 1006,593 1114,586 1118,594', '#f00', 1);
arrows('326,636 478,650 482,644 726,652 734,638 782,631 898,651 902,645 970,655 978,643', '#00f', -1);
arrows('570,657 610,648 1050,656 1070,649', '#0ff', -1);

// ELR histogram and its two averages
const hist = $('hist');
const hv = pts('174,718 189,716 191,707 195,689 199,693 203,698 211,704 219,704 223,692 227,693 231,695 234,708 242,714 250,719 255,724 258,717 262,707 270,712 278,704 282,705 286,728 291,742 294,739 298,740 310,731 318,723 325,712 334,705 342,712 360,713 375,714 382,727 386,735 398,743 410,752 415,768 419,768 424,752 432,752 440,762 446,785 450,800 454,836 458,822 462,794 467,780 471,748 475,742 480,728 486,743 494,724 502,722 510,716 514,704 518,699 523,702 530,716 534,733 538,736 542,744 550,728 558,720 562,710 566,696 570,686 574,705 580,710 590,714 622,707 634,714 650,719 658,717 662,704 670,701 674,697 678,704 682,727 690,722 694,738 698,774 702,805 706,790 710,768 714,756 718,747 726,722 734,722 742,724 746,739 754,732 766,734 778,720 786,706 790,700 794,707 806,700 810,708 814,737 818,745 822,760 830,760 838,750 846,771 854,762 862,755 870,750 878,770 886,750 892,735 898,720 906,727 914,740 922,735 926,744 938,730 946,735 954,752 962,740 970,722 974,714 978,725 990,722 1000,722 1010,725 1020,729 1030,720 1038,707 1050,705 1065,709 1074,704 1082,697 1090,700 1098,708 1102,698 1108,710 1118,716 1126,725 1134,728 1138,742 1146,742');
for (let x = 174; x <= 1146; x += 4) add(hist, 'path', { d: `M${x + .5} 717V${Math.round(at(hv, x))}`, stroke: '#f00' });
add(hist, 'path', { d: 'M174 717H1146', stroke: '#f00', 'stroke-width': 2 });
add(hist, 'path', { 'stroke-width': 2.6, stroke: '#0ff', d: path(pts('174,718 190,718 205,712 220,706 235,698 243,698 257,705 275,709 288,712 298,718 312,723 325,725 336,726 350,718 362,711 374,710 385,712 395,720 405,727 415,738 428,748 440,754 450,764 458,776 465,780 475,778 490,772 500,762 508,745 518,727 527,720 537,719 550,721 565,721 583,718 595,712 610,708 620,709 645,712 663,713 675,711 690,713 697,717 708,732 720,744 727,748 735,749 748,748 758,738 765,731 780,727 795,723 807,716 817,715 825,720 836,728 848,742 860,755 872,759 887,759 900,750 915,743 930,738 940,732 948,733 958,737 970,735 985,731 1000,726 1010,722 1030,723 1045,720 1062,716 1075,709 1088,704 1105,703 1118,703 1130,708 1140,716 1146,720')) });
add(hist, 'path', { 'stroke-width': 2.6, stroke: '#ffa500', d: path(pts('174,722 187,719 193,708 198,695 203,693 209,698 220,697 227,693 230,693 237,703 243,712 250,714 257,720 264,713 270,709 277,708 283,705 287,715 291,728 294,738 300,740 310,736 317,726 325,716 335,708 344,708 358,712 377,713 382,720 390,732 398,740 405,743 411,750 418,762 423,763 430,757 440,755 446,770 450,790 454,810 458,820 463,817 467,798 470,773 474,755 479,741 490,737 497,728 507,725 513,715 518,704 523,701 528,707 533,722 537,732 543,737 550,737 557,727 562,717 568,700 572,696 578,697 583,708 591,714 610,713 629,709 645,713 656,720 662,713 668,704 675,701 681,708 687,720 695,730 698,748 702,775 707,789 710,790 713,777 719,753 725,735 731,725 738,721 743,722 750,732 766,733 775,729 783,720 791,707 797,705 803,707 809,703 814,717 819,737 825,751 830,756 836,752 841,753 845,763 850,767 864,759 872,751 880,762 886,763 891,750 897,730 903,723 908,727 916,738 923,733 934,735 944,732 950,738 958,747 966,737 972,722 976,718 986,724 1000,720 1009,723 1022,727 1031,722 1041,712 1050,707 1069,709 1081,700 1091,698 1100,702 1109,705 1119,712 1125,721 1134,727 1141,736 1146,742')) });

// price scale
const ax = $('ax0');
['1.67405', '1.67340', '1.67275', '1.67210', '1.67145', '1.67080', '1.67015', '1.66950', '1.66885', '1.66820', '1.66755', '1.66690', '1.66625'].forEach((t, i) => {
  const y = Math.round(9 + i * 34.45);
  add(ax, 'rect', { x: 0, y, width: 3, height: 1 });
  add(ax, 'text', { x: 5, y: y + 3 }, t);
});
[['1.67200', 118], ['1.67000', 224], ['1.66800', 330], ['1.66576', 448], ['1.66560', 456], ['1.66500', 488]].forEach(([t, y], i) => {
  add(ax, 'rect', { x: 2, y: y - 5, width: 39, height: 11, fill: ['#f00', '#0f0', '#008000', '#4b0082', '#fff', '#808080'][i] });
  add(ax, 'text', { x: 5, y: y + 4, fill: '#000' }, t);
});
const labels = (id, list) => list.forEach(([t, y]) => add($(id), 'text', { x: 3, y }, t));
labels('ax1', [['1.3', 11], ['0.9', 21], ['0.75', 27], ['0.00', 58], ['-0.75', 89], ['-0.9', 95], ['-1.3', 106]]);
labels('ax2', [['0.0006', 11], ['0.00', 44], ['-0.002', 165]]);
labels('ax3', [['1.05', 11], ['-0.05', 29], ['0.00', 32]]);

// time scale
const time = $('time');
['2014', '09:08', '09:24', '09:40', '09:56', '10:12', '10:28', '10:44', '11:00', '11:16', '11:32', '11:48', '12:04', '12:20', '12:36', '12:52'].forEach((t, i) => {
  add(time, 'rect', { x: 1 + i * 64, y: 0, width: 1, height: 3 });
  add(time, 'text', { x: i * 64, y: 12 }, '10 Mar ' + t);
});

// currency strength bars
const pw = $('power');
const heat = ['#2e7bff', '#2e9bff', '#2ed9ff', '#2effef', '#2effa8', '#4eff4e', '#78ff3c', '#aaff2e', '#d2ff2e', '#ffff2e', '#fff42e', '#ffe02e', '#ffcc2e', '#ffb02e'];
[[12, 4, 5], [6, 14, 10], [8, 34, 5], [14, 44, 10]].forEach(([n, y, h]) => {
  for (let i = 0; i < n; i++) add(pw, 'rect', { x: 63 + i * 7, y, width: 5, height: h, fill: heat[i] });
});
[['EUR', 0, 20, '#0f0'], ['USD', 0, 50, '#0f0'], ['6.0', 34, 10, '#ffa500'], ['3.0', 34, 23, '#0ff'], ['3.9', 34, 40, '#ffa500'], ['6.9', 34, 53, '#0ff']].forEach(([t, x, y, fill]) => add(pw, 'text', { x, y, fill, 'font-size': 12 }, t));

const sig = $('signal');
for (let i = 0; i < 8; i++) {
  add(sig, 'rect', { x: i * 3, y: 0, width: 2, height: 9 - i, fill: '#6a7a10' });
  add(sig, 'rect', { x: i * 3, y: 10 - i, width: 2, height: 3 + i, fill: '#0a4a6a' });
}
```
